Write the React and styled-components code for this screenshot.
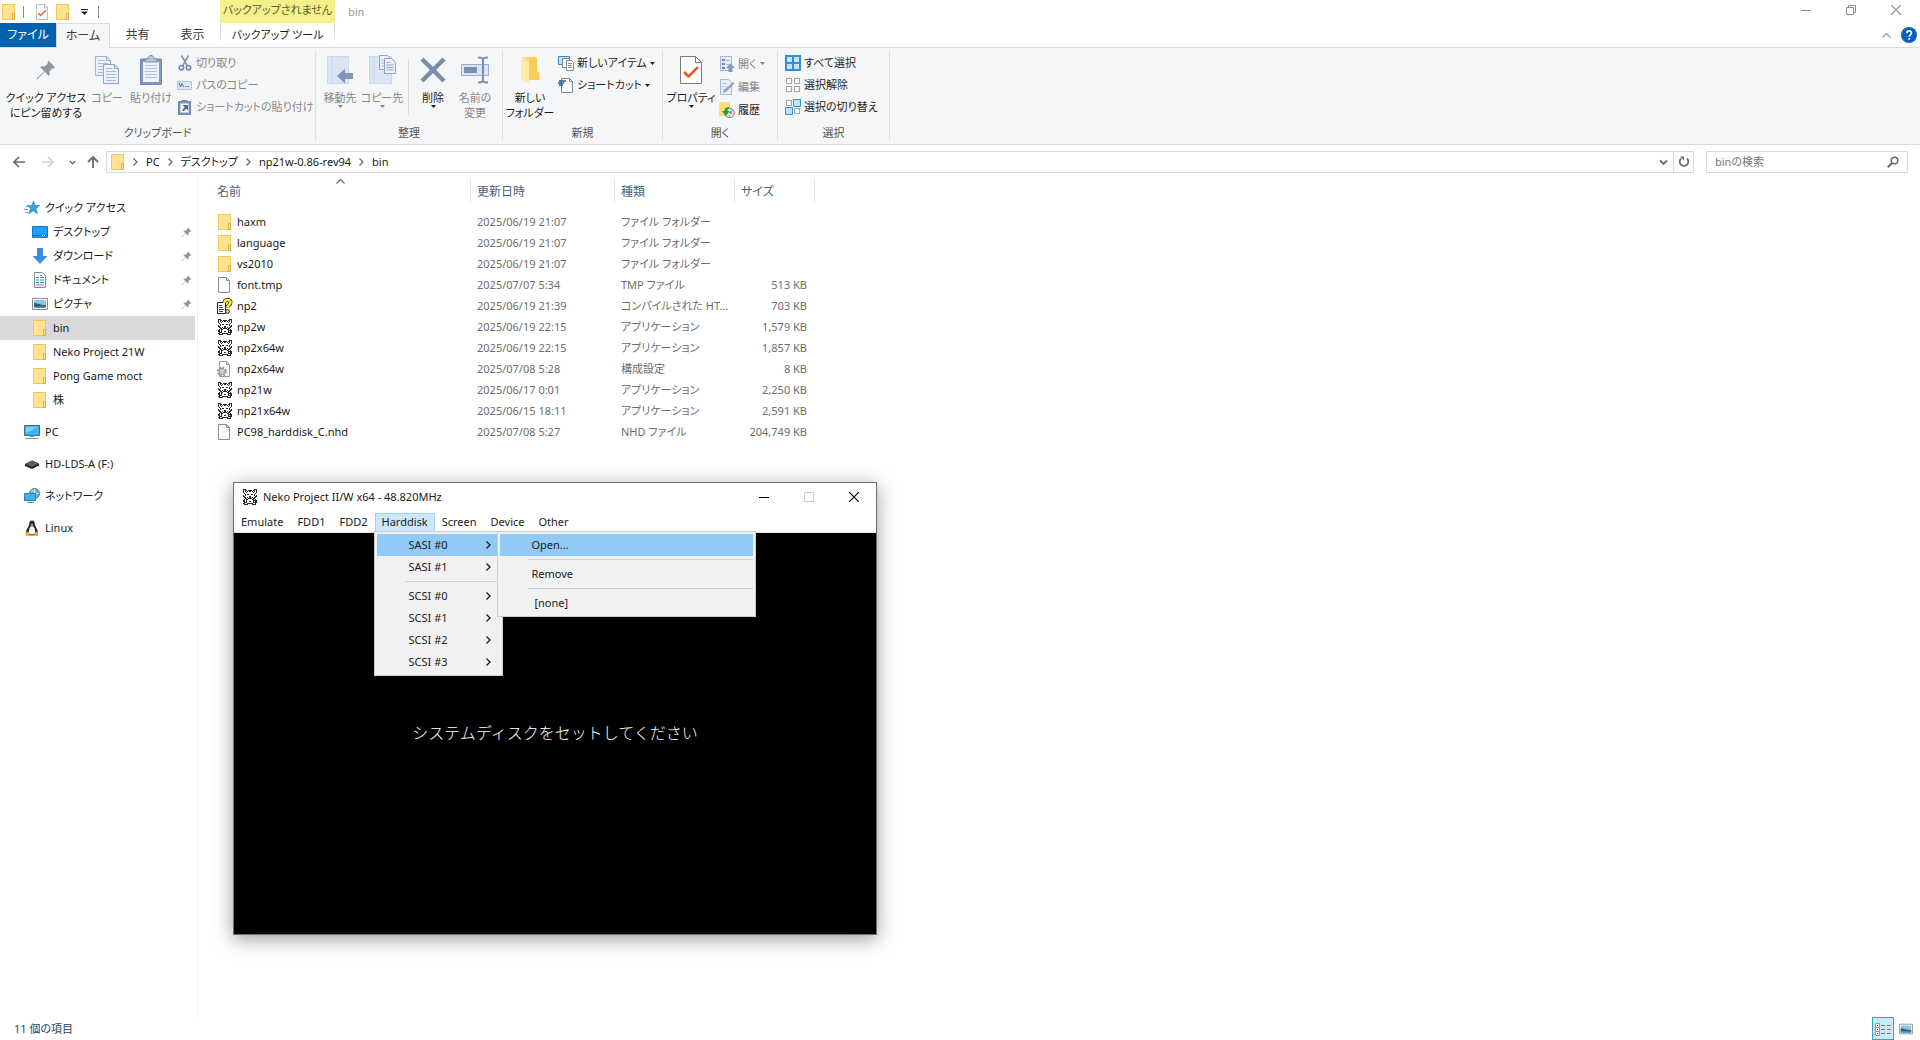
import React from "react";
import styled, { createGlobalStyle } from "styled-components";

const Global = createGlobalStyle`
  *, *::before, *::after { box-sizing: border-box; }
  html, body { margin: 0; }
  body, button, input, table {
    font-family: "Noto Sans", "Noto Sans CJK JP", sans-serif;
    font-size: 11px;
    line-height: 16px;
    font-feature-settings: "palt", "kern";
  }
  body { color: #1a1a1a; }
  button, input { border: 0; padding: 0; margin: 0; background: none; color: inherit; }
  a { color: inherit; text-decoration: none; }
  ul { list-style: none; margin: 0; padding: 0; }
  svg { display: block; flex: none; }
`;

/* ---------- icons ---------- */

const Svg = ({ w = 16, h = w, vb, children, ...rest }) => (
  <svg width={w} height={h} viewBox={vb || `0 0 ${w} ${h}`} fill="none" aria-hidden="true" {...rest}>
    {children}
  </svg>
);

const FolderIcon = () => (
  <Svg>
    <rect x="1.5" y=".5" width="12" height="15" fill="#ffe391" stroke="#efc95c" />
    <path d="M11.500 9.500h2v6h-2z" fill="#ffe391" stroke="#dfb040" />
  </Svg>
);
const FileIcon = () => (
  <Svg>
    <path d="M1.500.5h8l3 3v12h-11z" fill="#fafafa" stroke="#8c8c8c" />
    <path d="M9.500.5v3h3" stroke="#8c8c8c" />
  </Svg>
);
const ConfigIcon = () => (
  <Svg>
    <path d="M2.500.5h7l3 3v12h-10z" fill="#fafafa" stroke="#9a9a9a" />
    <path d="M9.500.5v3h3" stroke="#9a9a9a" />
    <circle cx="5" cy="10.500" r="4" stroke="#8d9398" strokeWidth="2" strokeDasharray="1.600 1.540" />
    <circle cx="5" cy="10.500" r="3" fill="#d3d7da" stroke="#8d9398" />
    <circle cx="5" cy="10.500" r="1" fill="#fff" stroke="#8d9398" strokeWidth=".5" />
  </Svg>
);
const HelpFileIcon = () => (
  <Svg>
    <path d="M.5 4.500h8v11h-8z" fill="#fff" stroke="#222" />
    <path d="M2 7.500h3M2 9.500h4M2 11.500h5M2 13.500h4" stroke="#444" />
    <path d="M7.500 5C7.500 2.500 8.500 2 10.500 2s3 1 3 2.500c0 2.500-3 2.500-3 5" stroke="#222" strokeWidth="4" />
    <path d="M7.500 5C7.500 2.500 8.500 2 10.500 2s3 1 3 2.500c0 2.500-3 2.500-3 5" stroke="#ffee2a" strokeWidth="2.600" />
    <circle cx="10.500" cy="13.500" r="1.900" fill="#ffee2a" stroke="#222" />
  </Svg>
);

const CAT = [
  "###........###",
  "#.##.####.##.#",
  "#.#.#.##.#.#.#",
  "#..#......#..#",
  ".#..........#.",
  "..#.##..##.#..",
  "#.#........#.#",
  "##....##....##",
  ".##.#.##.#.##.",
  "..##.####.##..",
  ".#.##....##.#.",
  "##.#......####",
  "##.#..##..#.##",
  ".###......####",
  "##..######..#.",
  ".####....####.",
];
const catPath = CAT.map((row, y) =>
  [...row].map((c, x) => (c === "#" ? `M${x + 1} ${y}h1v1h-1z` : "")).join("")
).join("");
const CatIcon = () => (
  <Svg shapeRendering="crispEdges">
    <path d="M2 1h12v14H2z" fill="#fff" />
    <path d={catPath} fill="#2a2a2a" />
  </Svg>
);

const PinShape = ({ size, color = "#8d979f" }) => (
  <Svg w={size} vb="0 0 20 20">
    <path
      fill={color}
      d="M12.500.8 19.200 7.500 17.800 8.400 16.600 8.200 13.400 11.400c.6 1.700.4 3.200-.6 4.500L8.600 11.700 1.500 19.200.5 19.500.8 18.500 8.200 11.300 4.200 7.200c1.300-1 2.800-1.200 4.500-.6L11.800 3.400 11.600 2.200z"
    />
  </Svg>
);

const CopyIcon = () => (
  <Svg w={24} h={28}>
    <path d="M.5.5h11l4 4v15h-15z" fill="#edf2fa" stroke="#9db0cc" />
    <path d="M11.500.5v4h4" stroke="#9db0cc" />
    <path d="M3 4.500h7M3 7.500h10M3 10.500h5M3 13.500h5M3 16.500h5" stroke="#a9bbd6" />
    <path d="M8.500 8.500h11l4 4v15h-15z" fill="#edf2fa" stroke="#8fa4c3" />
    <path d="M19.500 8.500v4h4" stroke="#8fa4c3" />
    <path d="M11 12.500h6M11 15.500h10M11 18.500h10M11 21.500h10M11 24.500h10" stroke="#a9bbd6" />
  </Svg>
);
const PasteIcon = () => (
  <Svg w={22} h={30}>
    <path d="M.5 4h21v25.500H.5z" fill="#8197bb" stroke="#6f86ad" />
    <path d="M3 7h16v20H3z" fill="#edf2fa" />
    <path d="M5 10.500h12M5 13.500h12M5 16.500h12M5 19.500h12M5 22.500h12" stroke="#b4c3da" />
    <path d="M5 7V4h3c0-2 1-3.500 3-3.500S14 2 14 4h3v3z" fill="#b9c4d4" stroke="#7d8da6" />
  </Svg>
);
const CutIcon = () => (
  <Svg>
    <path d="M4.500.5 10.500 11M11.500.5 5.500 11" stroke="#8497b3" strokeWidth="1.700" />
    <circle cx="4.500" cy="12.800" r="2.200" stroke="#6f86ad" strokeWidth="1.500" />
    <circle cx="11.500" cy="12.800" r="2.200" stroke="#6f86ad" strokeWidth="1.500" />
  </Svg>
);
const PathIcon = () => (
  <Svg>
    <path d="M.5 4.500h14v8H.5z" fill="#dce6f5" stroke="#b4c4de" />
    <path d="m2 6 1.500 4L5 6.500 6.500 10M8 9.500h1.500M10.500 9.500H12" stroke="#5e769f" />
  </Svg>
);
const PasteLinkIcon = () => (
  <Svg>
    <path d="M1.500 2.500h12v13h-12z" fill="#7f96ba" stroke="#6f86ad" />
    <path d="M3.500 4.500h8v9h-8z" fill="#fff" />
    <path d="M5 3V1.500h5V3" stroke="#7d8da6" />
    <path d="M5.500 6H11v5.500L9.200 9.700 6.500 12.500 5 11l2.700-2.800z" fill="#526c98" />
  </Svg>
);
const MoveToIcon = () => (
  <Svg w={27} h={30}>
    <path d="M.5 1.500h21v27H.5z" fill="#dbe6f5" stroke="#cbd8ec" />
    <path d="M5 2v26" stroke="#cbd8ec" />
    <path d="M10 21 18 13.500V18h8v6h-8v4.500z" fill="#8295b6" />
  </Svg>
);
const CopyToIcon = () => (
  <Svg w={27} h={30}>
    <path d="M.5 1.500h22v27H.5z" fill="#dbe6f5" stroke="#cbd8ec" />
    <path d="M5 2v26" stroke="#cbd8ec" />
    <path d="M10.500.5h8l3 3v11h-11z" fill="#edf2fa" stroke="#8fa4c3" />
    <path d="M15.500 3.500h7l4 4v11h-11z" fill="#edf2fa" stroke="#8fa4c3" />
    <path d="M17.500 7.500h4M17.500 10h7M17.500 12.500h7M17.500 15h7M12.500 5h2M12.500 8h2M12.500 11h2" stroke="#8fa4c3" />
  </Svg>
);
const DeleteIcon = () => (
  <Svg w={26} h={28}>
    <path d="M2 3l22 22M24 3 2 25" stroke="#7b8dab" strokeWidth="4.500" />
  </Svg>
);
const RenameIcon = () => (
  <Svg w={28} h={28}>
    <path d="M.5 8.500h27v11H.5z" fill="#dbe6f5" stroke="#98abc9" />
    <path d="M3 11h13v6H3z" fill="#7b8fb3" />
    <path d="M17 1.500c3 0 4.500.5 5 1.500.500-1 2-1.500 5-1.500M22 2v24M17 26.500c3 0 4.500-.5 5-1.500.500 1 2 1.500 5 1.500" stroke="#7b8fb3" strokeWidth="2" />
  </Svg>
);
const NewFolderIcon = () => (
  <Svg w={19} h={28}>
    <path d="M.5 1h15.500v14l2.500 1.500V24H.5z" fill="#ffd96b" />
    <path d="M8 2h8v14l2.500 1.500V24H8z" fill="#f7cc5a" />
    <path d="M.5 1 8 6v21.500L.5 24z" fill="#ffe9a6" />
  </Svg>
);
const NewItemIcon = () => (
  <Svg>
    <path d="M.5 1.500h11v8H.5z" fill="#bfe0f5" stroke="#3e87b5" />
    <path d="M4.500 3.500h7v9h-7z" fill="#fff" stroke="#7a8794" />
    <path d="M8.500 5.500h5l2 2v8h-7z" fill="#fff" stroke="#8a8a8a" />
    <path d="M10 8.500h4M10 10.500h4M10 12.500h4" stroke="#c07a6a" />
  </Svg>
);
const ShortcutIcon = () => (
  <Svg>
    <path d="M3.500 1.500h8l3 3v11h-11z" fill="#fff" stroke="#7d8790" />
    <path d="M11.500 1.500v3h3" stroke="#7d8790" />
    <path d="M1 4h7M0 6h6M1 8h4" stroke="#1c5f94" strokeWidth="1.300" />
  </Svg>
);
const PropertiesIcon = ({ w = 22, h = 28 }) => (
  <Svg w={w} h={h} vb="0 0 22 28">
    <path d="M.5.5h15l6 6v21H.5z" fill="#fff" stroke="#7a7a7a" />
    <path d="M15.500.5v6h6" stroke="#7a7a7a" />
    <path d="m4 16 4.500 4.500L18 11" stroke="#e0622b" strokeWidth="2.600" />
  </Svg>
);
const OpenIcon = () => (
  <Svg>
    <path d="M1.500.5h11v14h-11z" fill="#e3ebf7" stroke="#a5b7d3" />
    <path d="M3 3h3v2H3zM3 7h3v2H3zM3 11h3v2H3z" fill="#7187ad" />
    <path d="M7 4.500h4M7 8.500h3" stroke="#a5b7d3" />
    <path d="M11.500 7.500 16 12h-2.500v4h-4v-4H7z" fill="#8598bb" />
  </Svg>
);
const EditIcon = () => (
  <Svg>
    <path d="M1.500.5h8l3 3v12h-11z" fill="#e9eff9" stroke="#a5b7d3" />
    <path d="M3 4.500h5M3 7.500h5M3 10.500h4" stroke="#c2cfe3" />
    <path d="m14 3 1.500 1.500L7 13l-3 1 1-3z" fill="#90a3c4" />
  </Svg>
);
const HistoryIcon = () => (
  <Svg>
    <path d="M0 0h11v14H0z" fill="#ffe07a" />
    <circle cx="10.500" cy="11" r="4.800" fill="#e4e7e9" stroke="#777d82" />
    <path d="M10.500 11 13 8.500M10.500 11h2.500M10.500 13.500v1" stroke="#555" />
    <path d="M11 5C7 5 5.500 6.500 5.500 9H3l4 5 3.500-5H8.500c0-2 1-3 2.500-4z" fill="#1fa12b" />
  </Svg>
);
const Cells = () =>
  [[1, 1], [9, 1], [1, 9], [9, 9]].map(([x, y], i) => (
    <rect key={i} x={x + 0.5} y={y + 0.5} width="5" height="5" fill="#fff" stroke="#a5a5a5" />
  ));
const SelectAllIcon = () => (
  <Svg>
    <path d="M0 0h16v16H0z" fill="#2e90d6" />
    <path d="M2 2h5v5H2zM9 2h5v5H9zM2 9h5v5H2zM9 9h5v5H9z" fill="#c3e5fa" />
  </Svg>
);
const SelectNoneIcon = () => <Svg><Cells /></Svg>;
const InvertIcon = () => (
  <Svg>
    <Cells />
    <path d="M8.500.5h7v7h-7zM.5 8.500h7v7h-7z" fill="#bfe3fa" stroke="#3393d6" />
  </Svg>
);

const StarIcon = () => (
  <Svg>
    <path d="m9.500 1 1.600 4.500h4.700L12 8.600l1.500 5.200-4.300-3-4.400 3L6.500 8.600 3 5.500h4.800z" fill="#35a3e8" stroke="#1a7fc4" strokeWidth=".6" />
    <path d="M0 9.500h4M2 6.500h3M1 12.500h3" stroke="#5ab4ee" />
  </Svg>
);
const DesktopIcon = () => (
  <Svg>
    <path d="M.5 2.500h15v11H.5z" fill="#1fa0f5" stroke="#0f79cc" />
    <path d="M1 11.500h14" stroke="#0d6ab5" />
    <path d="M10 11.500h1M12 11.500h1" stroke="#fff" />
  </Svg>
);
const DownloadIcon = () => (
  <Svg><path d="M5 0h6v8h4.500L8 16 .5 8H5z" fill="#3a8ddb" /></Svg>
);
const DocumentIcon = () => (
  <Svg>
    <path d="M2.500.5h8l3 3v12h-11z" fill="#fff" stroke="#808a92" />
    <path d="M4 5.500h3M8 3.500h2M8 5.500h4M4 8h3M8 8h4M4 10.500h3M8 10.500h4M4 13h8" stroke="#3590c7" />
  </Svg>
);
const PictureIcon = ({ w = 16 }) => (
  <Svg w={w} vb="0 0 16 16">
    <path d="M.5 2.500h15v11H.5z" fill="#fff" stroke="#8a8a8a" />
    <path d="M2 4h12v8H2z" fill="#8cc4ee" />
    <path d="M2 7c4 0 5 2 12 2v3H2z" fill="#2d5f6e" />
    <path d="M2 10.500h12V12H2z" fill="#4f93cc" />
  </Svg>
);
const PcIcon = () => (
  <Svg>
    <path d="M.5 1.500h15v10H.5z" fill="#3cb2f2" stroke="#31708f" />
    <path d="M2 3h12L2 9z" fill="#7fd0f8" />
    <path d="M1 14.500h14M6 12.500h4" stroke="#8a9aa5" />
  </Svg>
);
const DriveIcon = () => (
  <Svg>
    <path d="m1 8 7-3.500L15 7.500v2L8 13 1 10z" fill="#222" />
    <path d="m1 8 7-3.500 7 3L8 11z" fill="#5b5b5b" />
  </Svg>
);
const NetworkIcon = () => (
  <Svg>
    <circle cx="10.500" cy="5.500" r="5" fill="#6fb1d6" stroke="#3f7c9f" />
    <path d="M7 3c2-1 3 1 4.500 0M12 6l3-1M10.500 1v4" stroke="#d8edf7" />
    <path d="M.5 5.500h11v7H.5z" fill="#3cb2f2" stroke="#2a7fb5" />
    <path d="M3 14.500h7" stroke="#7d8c96" />
  </Svg>
);
const LinuxIcon = () => (
  <Svg>
    <path d="M8 .5c2 0 2.800 1.500 2.800 3.500 0 2.500 3 4.500 3 8.500 0 2-2 3-5.800 3s-5.800-1-5.800-3c0-4 3-6 3-8.500C5.200 2 6 .5 8 .5z" fill="#2a2a2a" />
    <path d="M8 6c1.500 0 3.200 3 3.200 6 0 1.500-1.500 2.500-3.200 2.500S4.800 13.500 4.800 12c0-3 1.700-6 3.200-6z" fill="#fff" />
    <path d="M6.300 4.600 8 3.800l1.700.8L8 6z" fill="#e9a820" />
    <path d="M1.500 13.500 4 11.500 6.500 15 5 16H2zM14.500 13.500 12 11.500 9.500 15l1.500 1h3z" fill="#e9b030" />
  </Svg>
);

const Minus = () => <Svg w={10}><path d="M0 5.500h10" stroke="currentColor" /></Svg>;
const Restore = () => (
  <Svg w={10}><path d="M.5 2.500h7v7h-7zM2.500 2V.5h7v7H8" stroke="currentColor" /></Svg>
);
const Square = () => <Svg w={10}><path d="M.5.5h9v9h-9z" stroke="currentColor" /></Svg>;
const Cross = () => <Svg w={10}><path d="m0 0 10 10M10 0 0 10" stroke="currentColor" strokeWidth="1.200" /></Svg>;
const Caret = () => <Svg w={5} h={3}><path d="M0 0h5L2.500 3z" fill="currentColor" /></Svg>;
const ChevronRight = () => <Svg w={5} h={8}><path d="m.5.5 3.500 3.500-3.500 3.500" stroke="currentColor" strokeWidth="1.300" /></Svg>;
const ChevronDown = ({ w = 9 }) => <Svg w={w} vb="0 0 9 9"><path d="m1 2.500 3.500 3.500L8 2.500" stroke="currentColor" strokeWidth="1.800" /></Svg>;
const ChevronUp = () => <Svg w={9} h={5}><path d="M.5 4.500l4-4 4 4" stroke="currentColor" strokeWidth="1.200" /></Svg>;
const BackArrow = () => <Svg w={12}><path d="M12 6H1M6 1 1 6l5 5" stroke="currentColor" strokeWidth="1.600" /></Svg>;
const ForwardArrow = () => <Svg w={12}><path d="M0 6h11M6 1l5 5-5 5" stroke="currentColor" strokeWidth="1.600" /></Svg>;
const UpArrow = () => <Svg w={12}><path d="M6 12V1M1 6l5-5 5 5" stroke="currentColor" strokeWidth="1.800" /></Svg>;
const RefreshIcon = () => (
  <Svg w={12}>
    <path d="M3 2.500a4.300 4.300 0 1 0 6 0" stroke="currentColor" strokeWidth="1.800" />
    <path d="M2 .5h4v4z" fill="currentColor" />
  </Svg>
);
const SearchIcon = () => (
  <Svg w={12}><circle cx="7.500" cy="4.500" r="3.300" stroke="currentColor" strokeWidth="1.600" /><path d="M5 7 .8 11.200" stroke="currentColor" strokeWidth="2" /></Svg>
);
const HelpIcon = () => (
  <Svg>
    <circle cx="8" cy="8" r="8" fill="#0b62b8" />
    <path d="M5.800 6.200c0-3 4.600-3 4.600-.2C10.400 7.800 8.200 7.800 8.200 9.800" stroke="#fff" strokeWidth="1.700" />
    <path d="M7.300 11h1.800v1.800H7.300z" fill="#fff" />
  </Svg>
);
const DetailsIcon = () => (
  <Svg w={16}>
    <path d="M.5 2.500h4v4h-4zM.5 6.500h4v4h-4zM.5 10.500h4v4h-4z" fill="#fff" stroke="#a093a0" />
    <path d="M2 4.500h1M2 8.500h1M2 12.500h1" stroke="#333" />
    <path d="M6 4.500h4M12 4.500h4M6 8.500h4M12 8.500h4M6 12.500h4M12 12.500h4" stroke="#777" />
  </Svg>
);

/* ---------- shell ---------- */

const Page = styled.div`
  display: flex;
  flex-direction: column;
  min-height: 100vh;
  position: relative;
  background: #fff;
`;
const TitleBar = styled.header`
  display: flex;
  height: 23px;
`;
const QuickTools = styled.div`
  display: flex;
  align-items: center;
  gap: 5px;
  width: 220px;
  padding-left: 1px;
`;
const ToolButton = styled.button`
  display: flex;
  align-items: center;
  justify-content: center;
  min-width: 16px;
  height: 20px;
`;
const ToolDivider = styled.span`
  width: 1px;
  height: 12px;
  margin: 0 5px 0 1px;
  background: #8a8a8a;
`;
const ContextTitle = styled.div`
  width: 115px;
  text-align: center;
  line-height: 20px;
  color: #5d5a2e;
  background: #f2f18a;
`;
const WindowTitle = styled.span`
  flex: 1;
  padding-left: 13px;
  line-height: 24px;
  color: #999;
`;
const Controls = styled.div`
  display: flex;
  height: ${(p) => p.$h}px;
  padding-right: ${(p) => p.$pad || 0}px;
  color: ${(p) => p.$color};
`;
const ControlButton = styled.button`
  display: grid;
  place-items: center;
  width: 45px;
  color: ${(p) => (p.$dim ? "#ccc" : "inherit")};
`;
const Tabs = styled.nav`
  display: flex;
  height: 25px;
  border-bottom: 1px solid #dadbdc;
`;
const Tab = styled.button`
  width: ${(p) => p.$w}px;
  height: ${(p) => (p.$kind === "active" ? 25 : 24)}px;
  font-size: 12px;
  color: ${(p) => (p.$kind === "file" ? "#fff" : "#3b3b3b")};
  background: ${(p) => (p.$kind === "file" ? "#0063b1" : p.$kind === "active" ? "#f5f6f7" : "none")};
  border: solid #dadbdc;
  border-width: ${(p) => (p.$kind === "active" ? "1px 1px 0" : "0")};
`;
const ContextTab = styled.button`
  width: 115px;
  height: 24px;
  border: solid transparent;
  border-width: 0 1px;
  border-image: linear-gradient(#d0d1d2 40%, transparent 80%) 1;
`;
const TabTools = styled.div`
  display: flex;
  align-items: center;
  gap: 10px;
  margin-left: auto;
  padding-right: 3px;
  color: #999;
`;

/* ---------- ribbon ---------- */

const Ribbon = styled.div`
  display: flex;
  height: 97px;
  padding: 2px 0 3px;
  background: #f5f6f7;
  border-bottom: 1px solid #dadbdc;
`;
const Group = styled.section`
  display: flex;
  flex-direction: column;
  width: ${(p) => p.$w}px;
  border-right: 1px solid #e0e1e2;
`;
const GroupBody = styled.div`
  display: flex;
  flex: 1;
  padding-left: ${(p) => p.$pad}px;
`;
const GroupLabel = styled.div`
  text-align: center;
  color: #555;
`;
const BigButton = styled.button`
  display: flex;
  flex-direction: column;
  align-items: center;
  width: ${(p) => p.$w}px;
  line-height: 15px;
  white-space: nowrap;
  color: ${(p) => (p.$off ? "#868686" : "#1e1e1e")};
`;
const BigIcon = styled.span`
  display: grid;
  place-items: center;
  height: 40px;
`;
const BodyDivider = styled.span`
  width: 1px;
  height: 56px;
  margin: 9px 5px 0 6px;
  background: #dcdddd;
`;
const SmallList = styled.div`
  display: flex;
  flex-direction: column;
  margin-left: ${(p) => p.$ml || 0}px;
  padding-top: 2px;
`;
const SmallButton = styled.button`
  display: flex;
  align-items: center;
  gap: 3px;
  height: ${(p) => p.$h || 22}px;
  white-space: nowrap;
  color: ${(p) => (p.$off ? "#868686" : "#1e1e1e")};
`;

/* ---------- address row ---------- */

const AddressRow = styled.div`
  display: flex;
  align-items: center;
  height: 34px;
  padding-right: 12px;
`;
const NavButtons = styled.div`
  display: flex;
  align-items: center;
  width: 106px;
  padding-left: 4px;
  color: #6b6b6b;
`;
const NavButton = styled.button`
  display: grid;
  place-items: center;
  width: ${(p) => p.$w}px;
  height: 22px;
  color: ${(p) => (p.$off ? "#d0d0d0" : "inherit")};
`;
const AddressBox = styled.div`
  display: flex;
  align-items: center;
  flex: 1;
  height: 22px;
  padding-left: 3px;
  border: 1px solid #d9d9d9;
  color: #666;
`;
const Crumbs = styled.div`
  display: flex;
  align-items: center;
  padding-left: 7px;
`;
const Crumb = styled.a`
  margin: 0 8px;
  color: #1a1a1a;
`;
const AddressButton = styled.button`
  display: grid;
  place-items: center;
  width: 20px;
  height: 20px;
  color: #6b6b6b;
  ${(p) => p.$edge && "margin-left: auto;"}
  ${(p) => p.$line && "border-left: 1px solid #d9d9d9;"}
`;
const SearchBox = styled.label`
  display: flex;
  align-items: center;
  width: 202px;
  height: 22px;
  margin-left: 12px;
  padding: 0 8px;
  border: 1px solid #d9d9d9;
  color: #6b6b6b;
`;
const SearchInput = styled.input`
  flex: 1;
  min-width: 0;
  outline: 0;
  &::placeholder { color: #767676; opacity: 1; }
`;

/* ---------- body ---------- */

const Body = styled.div`
  display: flex;
  flex: 1;
`;
const Sidebar = styled.nav`
  width: 198px;
  padding: 17px 2px 0 0;
  border-right: 1px solid #f2f2f2;
`;
const SideItem = styled.a`
  display: flex;
  align-items: center;
  gap: 5px;
  height: 24px;
  padding: 0 3px 0 ${(p) => (p.$root ? 24 : 32)}px;
  margin-bottom: ${(p) => (p.$spaced ? 8 : 0)}px;
  background: ${(p) => (p.$on ? "#d9d9d9" : "none")};
`;
const SidePin = styled.span`
  margin-left: auto;
`;
const FileTable = styled.table`
  align-self: flex-start;
  margin-left: 13px;
  table-layout: fixed;
  width: 604px;
  border-collapse: separate;
  border-spacing: 0;
  tbody::before {
    content: "";
    display: block;
    height: 7px;
  }
`;
const HeadCell = styled.th`
  position: relative;
  height: 25px;
  padding: 0 6px;
  text-align: left;
  font-size: 12px;
  font-weight: 400;
  color: #4c607a;
  border-right: 1px solid #e5e5e5;
`;
const SortMark = styled.span`
  position: absolute;
  top: 0;
  left: 50%;
  margin-left: -5px;
  color: #6b6b6b;
`;
const Cell = styled.td`
  height: 21px;
  padding: 0 8px 0 6px;
  white-space: nowrap;
  overflow: hidden;
  text-align: ${(p) => (p.$right ? "right" : "left")};
  color: #6d6d6d;
`;
const FileName = styled.span`
  display: flex;
  align-items: center;
  gap: 4px;
  color: #1a1a1a;
`;
const StatusBar = styled.footer`
  display: flex;
  align-items: center;
  height: 23px;
  padding: 0 6px 0 14px;
  color: #2f4561;
`;
const ViewButtons = styled.div`
  display: flex;
  align-items: center;
  gap: 4px;
  margin-left: auto;
`;
const ViewButton = styled.button`
  display: grid;
  place-items: center;
  width: ${(p) => (p.$on ? 22 : 16)}px;
  height: 23px;
  background: ${(p) => (p.$on ? "#cde8f6" : "none")};
  border: ${(p) => (p.$on ? "1px solid #3e9fc9" : "0")};
`;

/* ---------- emulator window ---------- */

const AppWindow = styled.section`
  position: absolute;
  top: 482px;
  left: 233px;
  width: 644px;
  background: #fff;
  border: 1px solid #6f6f6f;
  box-shadow: 0 4px 18px rgba(0, 0, 0, 0.4);
`;
const AppTitle = styled.div`
  display: flex;
  align-items: center;
  gap: 5px;
  height: 30px;
  padding: 0 0 2px 8px;
`;
const AppName = styled.span`
  flex: 1;
`;
const MenuBar = styled.nav`
  display: flex;
  height: 20px;
  border-bottom: 1px solid #e3e3e3;
`;
const MenuEntry = styled.div`
  position: relative;
`;
const MenuButton = styled.button`
  height: 19px;
  padding: 0 6px 2px;
  border: 1px solid ${(p) => (p.$on ? "#99d1f5" : "transparent")};
  background: ${(p) => (p.$on ? "#cce8ff" : "none")};
`;
const Popup = styled.ul`
  position: absolute;
  top: ${(p) => p.$top}px;
  left: ${(p) => p.$left}px;
  z-index: 1;
  width: ${(p) => p.$w}px;
  padding: 2px;
  background: #f1f1f1;
  border: 1px solid #ccc;
`;
const PopupItem = styled.li`
  ${(p) => p.$line && `
    height: 7px;
    padding: 3px 0 0 28px;
    &::after { content: ""; display: block; height: 1px; background: #d2d2d2; }
  `}
`;
const PopupButton = styled.button`
  display: flex;
  align-items: center;
  justify-content: space-between;
  width: 100%;
  height: 22px;
  padding: 0 9px 0 32px;
  white-space: pre;
  background: ${(p) => (p.$on ? "#91c9f7" : "none")};
`;
const Screen = styled.div`
  display: grid;
  place-items: center;
  height: 401px;
  padding-bottom: 4px;
  background: #000;
  color: #fff;
  font-family: "Noto Sans CJK JP", sans-serif;
  font-size: 16px;
  font-weight: 300;
  font-feature-settings: normal;
`;

/* ---------- data ---------- */

const sideItems = [
  { icon: <StarIcon />, text: "クイック アクセス", root: true },
  { icon: <DesktopIcon />, text: "デスクトップ", pin: true },
  { icon: <DownloadIcon />, text: "ダウンロード", pin: true },
  { icon: <DocumentIcon />, text: "ドキュメント", pin: true },
  { icon: <PictureIcon />, text: "ピクチャ", pin: true },
  { icon: <FolderIcon />, text: "bin", on: true },
  { icon: <FolderIcon />, text: "Neko Project 21W" },
  { icon: <FolderIcon />, text: "Pong Game moct" },
  { icon: <FolderIcon />, text: "株", spaced: true },
  { icon: <PcIcon />, text: "PC", root: true, spaced: true },
  { icon: <DriveIcon />, text: "HD-LDS-A (F:)", root: true, spaced: true },
  { icon: <NetworkIcon />, text: "ネットワーク", root: true, spaced: true },
  { icon: <LinuxIcon />, text: "Linux", root: true },
];

const files = [
  [<FolderIcon />, "haxm", "2025/06/19 21:07", "ファイル フォルダー", ""],
  [<FolderIcon />, "language", "2025/06/19 21:07", "ファイル フォルダー", ""],
  [<FolderIcon />, "vs2010", "2025/06/19 21:07", "ファイル フォルダー", ""],
  [<FileIcon />, "font.tmp", "2025/07/07 5:34", "TMP ファイル", "513 KB"],
  [<HelpFileIcon />, "np2", "2025/06/19 21:39", "コンパイルされた HT...", "703 KB"],
  [<CatIcon />, "np2w", "2025/06/19 22:15", "アプリケーション", "1,579 KB"],
  [<CatIcon />, "np2x64w", "2025/06/19 22:15", "アプリケーション", "1,857 KB"],
  [<ConfigIcon />, "np2x64w", "2025/07/08 5:28", "構成設定", "8 KB"],
  [<CatIcon />, "np21w", "2025/06/17 0:01", "アプリケーション", "2,250 KB"],
  [<CatIcon />, "np21x64w", "2025/06/15 18:11", "アプリケーション", "2,591 KB"],
  [<FileIcon />, "PC98_harddisk_C.nhd", "2025/07/08 5:27", "NHD ファイル", "204,749 KB"],
];

const crumbs = ["PC", "デスクトップ", "np21w-0.86-rev94", "bin"];
const diskMenu = ["SASI #0", "SASI #1", null, "SCSI #0", "SCSI #1", "SCSI #2", "SCSI #3"];
const openMenu = ["Open...", null, "Remove", null, " [none]"];

const Big = ({ icon, lines, w, off, caret }) => (
  <BigButton $w={w} $off={off}>
    <BigIcon>{icon}</BigIcon>
    {lines.map((l) => <span key={l}>{l}</span>)}
    {caret && <Caret />}
  </BigButton>
);
const Small = ({ icon, text, off, caret, h }) => (
  <SmallButton $off={off} $h={h}>
    {icon}
    <span>{text}</span>
    {caret && <Caret />}
  </SmallButton>
);

function DiskMenu() {
  return (
    <Popup $top={18} $left={-1} $w={129}>
      {diskMenu.map((text, i) =>
        text ? (
          <PopupItem key={i}>
            <PopupButton $on={i === 0}>{text}<ChevronRight /></PopupButton>
            {i === 0 && (
              <Popup $top={-1} $left={122} $w={259}>
                {openMenu.map((t, j) =>
                  t ? (
                    <PopupItem key={j}><PopupButton $on={j === 0}>{t}</PopupButton></PopupItem>
                  ) : (
                    <PopupItem key={j} $line />
                  )
                )}
              </Popup>
            )}
          </PopupItem>
        ) : (
          <PopupItem key={i} $line />
        )
      )}
    </Popup>
  );
}

export default function App() {
  return (
    <Page>
      <Global />
      <TitleBar>
        <QuickTools>
          <FolderIcon />
          <ToolDivider />
          <ToolButton aria-label="プロパティ"><PropertiesIcon w={12} h={16} /></ToolButton>
          <ToolButton aria-label="新しいフォルダー"><FolderIcon /></ToolButton>
          <ToolButton aria-label="カスタマイズ"><Svg w={7} h={6}><path d="M0 .5h7" stroke="#222" /><path d="M0 2.500h7L3.500 6z" fill="#222" /></Svg></ToolButton>
          <ToolDivider />
        </QuickTools>
        <ContextTitle>バックアップされません</ContextTitle>
        <WindowTitle>bin</WindowTitle>
        <Controls $h={20} $pad={2} $color="#8c8c8c">
          <ControlButton aria-label="最小化"><Minus /></ControlButton>
          <ControlButton aria-label="元に戻す"><Restore /></ControlButton>
          <ControlButton aria-label="閉じる"><Cross /></ControlButton>
        </Controls>
      </TitleBar>
      <Tabs>
        <Tab $w={56} $kind="file">ファイル</Tab>
        <Tab $w={54} $kind="active">ホーム</Tab>
        <Tab $w={55}>共有</Tab>
        <Tab $w={55}>表示</Tab>
        <ContextTab>バックアップ ツール</ContextTab>
        <TabTools>
          <button aria-label="リボンの最小化"><ChevronUp /></button>
          <button aria-label="ヘルプ"><HelpIcon /></button>
        </TabTools>
      </Tabs>

      <Ribbon>
        <Group $w={316}>
          <GroupBody $pad={5}>
            <Big w={82} icon={<PinShape size={20} />} lines={["クイック アクセス", "にピン留めする"]} />
            <Big w={40} off icon={<CopyIcon />} lines={["コピー"]} />
            <Big w={48} off icon={<PasteIcon />} lines={["貼り付け"]} />
            <SmallList $ml={2}>
              <Small off icon={<CutIcon />} text="切り取り" />
              <Small off icon={<PathIcon />} text="パスのコピー" />
              <Small off icon={<PasteLinkIcon />} text="ショートカットの貼り付け" />
            </SmallList>
          </GroupBody>
          <GroupLabel>クリップボード</GroupLabel>
        </Group>
        <Group $w={187}>
          <GroupBody $pad={2}>
            <Big w={44} off caret icon={<MoveToIcon />} lines={["移動先"]} />
            <Big w={40} off caret icon={<CopyToIcon />} lines={["コピー先"]} />
            <BodyDivider />
            <Big w={38} caret icon={<DeleteIcon />} lines={["削除"]} />
            <Big w={46} off icon={<RenameIcon />} lines={["名前の", "変更"]} />
          </GroupBody>
          <GroupLabel>整理</GroupLabel>
        </Group>
        <Group $w={160}>
          <GroupBody $pad={3}>
            <Big w={48} icon={<NewFolderIcon />} lines={["新しい", "フォルダー"]} />
            <SmallList $ml={4}>
              <Small caret icon={<NewItemIcon />} text="新しいアイテム" />
              <Small caret icon={<ShortcutIcon />} text="ショートカット" />
            </SmallList>
          </GroupBody>
          <GroupLabel>新規</GroupLabel>
        </Group>
        <Group $w={115}>
          <GroupBody $pad={4}>
            <Big w={48} caret icon={<PropertiesIcon />} lines={["プロパティ"]} />
            <SmallList $ml={4}>
              <Small off caret h={23} icon={<OpenIcon />} text="開く" />
              <Small off h={23} icon={<EditIcon />} text="編集" />
              <Small h={23} icon={<HistoryIcon />} text="履歴" />
            </SmallList>
          </GroupBody>
          <GroupLabel>開く</GroupLabel>
        </Group>
        <Group $w={112}>
          <GroupBody $pad={7}>
            <SmallList>
              <Small icon={<SelectAllIcon />} text="すべて選択" />
              <Small icon={<SelectNoneIcon />} text="選択解除" />
              <Small icon={<InvertIcon />} text="選択の切り替え" />
            </SmallList>
          </GroupBody>
          <GroupLabel>選択</GroupLabel>
        </Group>
      </Ribbon>

      <AddressRow>
        <NavButtons>
          <NavButton $w={30} aria-label="戻る"><BackArrow /></NavButton>
          <NavButton $w={28} $off aria-label="進む"><ForwardArrow /></NavButton>
          <NavButton $w={20} aria-label="最近"><ChevronDown w={7} /></NavButton>
          <NavButton $w={22} aria-label="上へ"><UpArrow /></NavButton>
        </NavButtons>
        <AddressBox>
          <FolderIcon />
          <Crumbs>
            {crumbs.map((c) => (
              <React.Fragment key={c}>
                <ChevronRight />
                <Crumb href="#">{c}</Crumb>
              </React.Fragment>
            ))}
          </Crumbs>
          <AddressButton $edge aria-label="履歴"><ChevronDown /></AddressButton>
          <AddressButton $line aria-label="更新"><RefreshIcon /></AddressButton>
        </AddressBox>
        <SearchBox>
          <SearchInput type="search" placeholder="binの検索" aria-label="binの検索" />
          <SearchIcon />
        </SearchBox>
      </AddressRow>

      <Body>
        <Sidebar>
          {sideItems.map((s) => (
            <SideItem key={s.text} href="#" $root={s.root} $spaced={s.spaced} $on={s.on}>
              {s.icon}
              <span>{s.text}</span>
              {s.pin && <SidePin><PinShape size={11} /></SidePin>}
            </SideItem>
          ))}
        </Sidebar>
        <FileTable>
          <colgroup>
            <col width="260" />
            <col width="144" />
            <col width="120" />
            <col width="80" />
          </colgroup>
          <thead>
            <tr>
              <HeadCell>名前<SortMark><ChevronUp /></SortMark></HeadCell>
              <HeadCell>更新日時</HeadCell>
              <HeadCell>種類</HeadCell>
              <HeadCell>サイズ</HeadCell>
            </tr>
          </thead>
          <tbody>
            {files.map(([icon, name, date, type, size], i) => (
              <tr key={i}>
                <Cell><FileName>{icon}{name}</FileName></Cell>
                <Cell>{date}</Cell>
                <Cell>{type}</Cell>
                <Cell $right>{size}</Cell>
              </tr>
            ))}
          </tbody>
        </FileTable>
      </Body>

      <StatusBar>
        <span>11 個の項目</span>
        <ViewButtons>
          <ViewButton $on aria-label="詳細"><DetailsIcon /></ViewButton>
          <ViewButton aria-label="大アイコン"><PictureIcon w={14} /></ViewButton>
        </ViewButtons>
      </StatusBar>

      <AppWindow>
        <AppTitle>
          <CatIcon />
          <AppName>Neko Project II/W x64 - 48.820MHz</AppName>
          <Controls $h={28} $color="#000">
            <ControlButton aria-label="最小化"><Minus /></ControlButton>
            <ControlButton $dim aria-label="最大化"><Square /></ControlButton>
            <ControlButton aria-label="閉じる"><Cross /></ControlButton>
          </Controls>
        </AppTitle>
        <MenuBar>
          {["Emulate", "FDD1", "FDD2", "Harddisk", "Screen", "Device", "Other"].map((m) => (
            <MenuEntry key={m}>
              <MenuButton $on={m === "Harddisk"}>{m}</MenuButton>
              {m === "Harddisk" && <DiskMenu />}
            </MenuEntry>
          ))}
        </MenuBar>
        <Screen>システムディスクをセットしてください</Screen>
      </AppWindow>
    </Page>
  );
}
